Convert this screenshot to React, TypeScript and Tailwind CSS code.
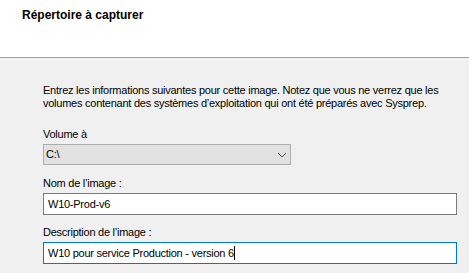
export default function App() {
  return (
    <div
      className="w-[469px] h-[273px] overflow-hidden bg-[#f0f0f0] text-black text-[11px] tracking-[-0.25px]"
      style={{ fontFamily: '"Liberation Sans", Arial, sans-serif' }}
    >
      {/* Header */}
      <div className="h-[58px] bg-white border-b border-[#a0a0a0] pl-[22px] pt-[8px]">
        <h1 className="font-bold text-[12px] leading-[15px] tracking-normal">Répertoire à capturer</h1>
      </div>

      {/* Body */}
      <div className="px-[43px]">
        <p className="mt-[26px] leading-[13px] whitespace-nowrap">
          Entrez les informations suivantes pour cette image. Notez que vous ne verrez que les
          <br />
          volumes contenant des systèmes d’exploitation qui ont été préparés avec Sysprep.
        </p>

        <label className="block mt-[18px] leading-[13px]">Volume à</label>
        <div className="mt-[3px] w-[248px] h-[21px] bg-[#e1e1e1] border border-[#adadad] flex items-center justify-between pl-[2px] pr-[3px]">
          <span>C:\</span>
          <svg width="10" height="6" viewBox="0 0 10 6" className="mt-[1px]">
            <polyline points="1,1 5,5 9,1" fill="none" stroke="#505050" strokeWidth="1" />
          </svg>
        </div>

        <label className="block mt-[12px] leading-[13px]">Nom de l’image :</label>
        <div className="mt-[3px] w-[414px] h-[22px] bg-white border border-[#7a7a7a] flex items-center pl-[4px]">
          <span>W10-Prod-v6</span>
        </div>

        <label className="block mt-[11px] leading-[13px]">Description de l’image :</label>
        <div className="mt-[3px] w-[414px] h-[22px] bg-white border border-[#0078d7] flex items-center pl-[4px]">
          <span>W10 pour service Production - version 6</span>
          <span className="inline-block w-px h-[14px] bg-black" />
        </div>
      </div>
    </div>
  );
}
